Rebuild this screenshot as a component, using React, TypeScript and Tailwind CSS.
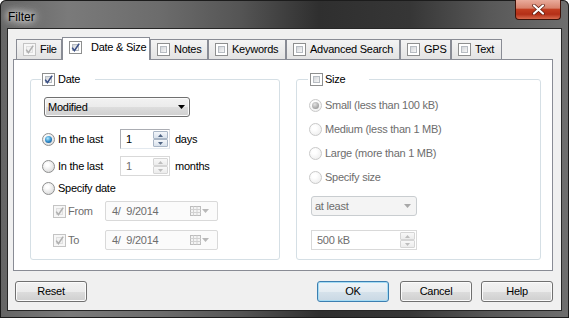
import React from "react";

function Check({ checked = false, disabled = false }: { checked?: boolean; disabled?: boolean }) {
  return (
    <span
      className={
        "relative block w-[13px] h-[13px] shrink-0 border " +
        (disabled ? "border-[#c4c4c4] bg-[#f7f7f7]" : "border-[#8e8f8f] bg-white")
      }
    >
      <span
        className={
          "absolute inset-[2px] border " +
          (disabled
            ? "border-[#e0e0e0] bg-[#f2f2f2]"
            : "border-[#b7bcc2] bg-[linear-gradient(135deg,#d3d6da,#f7f7f7)]")
        }
      />
      {checked && (
        <svg className="absolute left-0 top-0" width="11" height="11" viewBox="0 0 11 11">
          <path
            d="M2.2 5.6 L4.4 8.6 L9.2 1.6"
            fill="none"
            stroke={disabled ? "#b0b0b0" : "#3a4f86"}
            strokeWidth="1.6"
          />
        </svg>
      )}
    </span>
  );
}

function Radio({ checked = false, disabled = false }: { checked?: boolean; disabled?: boolean }) {
  return (
    <span
      className={
        "flex items-center justify-center w-[13px] h-[13px] shrink-0 rounded-full border " +
        (disabled
          ? "border-[#c9c9c9] bg-[radial-gradient(circle_at_40%_35%,#ffffff_20%,#ececec_90%)]"
          : "border-[#8e8f8f] bg-[radial-gradient(circle_at_40%_35%,#ffffff_15%,#d6d6d6_90%)]")
      }
    >
      {checked && (
        <span
          className={
            "w-[7px] h-[7px] rounded-full " +
            (disabled
              ? "bg-[radial-gradient(circle_at_40%_35%,#e2e2e2,#9c9c9c_75%)]"
              : "bg-[radial-gradient(circle_at_40%_35%,#b4ecff,#2a86c6_55%,#1a4f82_90%)]")
          }
        />
      )}
    </span>
  );
}

function Arrow({ up = false, color }: { up?: boolean; color: string }) {
  return (
    <svg width="5" height="3" viewBox="0 0 5 3">
      <path d={up ? "M0 3H5L2.5 0Z" : "M0 0H5L2.5 3Z"} fill={color} />
    </svg>
  );
}

function SpinBtn({ up = false, disabled = false }: { up?: boolean; disabled?: boolean }) {
  return (
    <div
      className={
        "flex-1 flex items-center justify-center border rounded-[1px] " +
        (disabled
          ? "border-[#d5d5d5] bg-[linear-gradient(180deg,#f8f8f8,#ececec)]"
          : "border-[#a9b6c6] bg-[linear-gradient(180deg,#f3f6fa,#d9e2ec)]")
      }
    >
      <Arrow up={up} color={disabled ? "#bdbdbd" : "#4f6584"} />
    </div>
  );
}

function Spin({ value, disabled = false, wide = false }: { value: string; disabled?: boolean; wide?: boolean }) {
  return (
    <div
      className={
        (wide ? "w-[106px] ml-[2px] " : "w-[50px] ") +
        "h-[20px] flex border bg-white " +
        (disabled
          ? "border-[#d9d9d9] text-[#6d6d6d]"
          : "border-[#abadb3] border-r-[#dbdfe6] border-b-[#e3e9ef] text-black")
      }
    >
      <div className="flex-1 flex items-center pl-[5px]">{value}</div>
      <div className="w-[16px] flex flex-col py-[1px] pr-[1px]">
        <SpinBtn up disabled={disabled} />
        <SpinBtn disabled={disabled} />
      </div>
    </div>
  );
}

function DatePick() {
  return (
    <div className="w-[113px] h-[20px] flex items-center border border-[#d9d9d9] rounded-[2px] bg-[#fbfbfb] pl-[6px] pr-[8px] text-[#6d6d6d]">
      <span className="whitespace-pre">4/  9/2014</span>
      <svg className="ml-auto" width="11" height="10" viewBox="0 0 11 10">
        <rect x="0.5" y="0.5" width="10" height="9" fill="#f4f4f4" stroke="#bdbdbd" />
        <path d="M0.5 3.5H10.5M0.5 6.5H10.5M3.5 0.5V9.5M7 0.5V9.5" stroke="#d2d2d2" />
      </svg>
      <svg className="ml-[1px]" width="7" height="4" viewBox="0 0 7 4">
        <path d="M0 0H7L3.5 4Z" fill="#b9b9b9" />
      </svg>
    </div>
  );
}

function Btn({ label, def = false, cls }: { label: string; def?: boolean; cls: string }) {
  return (
    <div
      className={
        cls +
        " w-[72px] h-[21px] flex items-center justify-center rounded-[3px] border " +
        (def
          ? "border-[#3c7fb1] shadow-[inset_0_0_0_1px_#a6dcf4] bg-[linear-gradient(180deg,#eef4f8_0%,#e4ecf2_50%,#d6e2eb_51%,#c9d8e4_100%)]"
          : "border-[#707070] shadow-[inset_0_0_0_1px_#fbfbfb] bg-[linear-gradient(180deg,#f2f2f2_0%,#ebebeb_50%,#dddddd_51%,#cfcfcf_100%)]")
      }
    >
      {label}
    </div>
  );
}

function Tab({ label, w, selected = false, checked = false, disabled = false }: { label: string; w: string; selected?: boolean; checked?: boolean; disabled?: boolean }) {
  if (selected) {
    return (
      <div className={w + " relative z-10 -mb-px h-[23px] flex items-center pl-[6px] pb-[3px] gap-[9px] whitespace-nowrap bg-white border border-b-0 border-[#898c95]"}>
        <Check checked={checked} />
        <span>{label}</span>
      </div>
    );
  }
  return (
    <div className={w + " h-[20px] flex items-center pl-[6px] gap-[4px] whitespace-nowrap border border-b-0 border-[#898c95] bg-[linear-gradient(180deg,#f4f4f4,#e3e3e3)]"}>
      <Check checked={checked} disabled={disabled} />
      <span>{label}</span>
    </div>
  );
}

export default function App() {
  return (
    <div className="w-[569px] h-[318px] flex flex-col rounded-t-[6px] overflow-hidden text-[11px] tracking-[-0.25px] text-black font-['Liberation_Sans',Arial,sans-serif] bg-[linear-gradient(90deg,#656565_0%,#7a7a7a_12%,#6c6c6c_28%,#555555_42%,#2f2f2f_56%,#363636_72%,#585858_86%,#6e6e6e_100%)] shadow-[inset_0_0_0_1px_#1c1c1c]">
      {/* title bar */}
      <div className="h-[29px] flex items-start pl-[8px] pr-[8px]">
        <span className="mt-[8px] text-[12px] tracking-normal text-black [text-shadow:0_0_6px_#ffffff,0_0_10px_#ffffff,0_0_14px_#ffffff]">Filter</span>
        <div className="ml-auto w-[46px] h-[20px] flex items-center justify-center rounded-b-[4px] border border-t-0 border-[#3d1209] bg-[linear-gradient(180deg,#e9ab9b_0%,#d8826c_42%,#c23d20_50%,#b42f17_75%,#d7694c_100%)]">
          <svg width="13" height="11" viewBox="0 0 13 11">
            <path d="M2 1.5 L11 9.5 M11 1.5 L2 9.5" stroke="#5a1a0e" strokeWidth="3.6" strokeLinecap="round" />
            <path d="M2 1.5 L11 9.5 M11 1.5 L2 9.5" stroke="#ffffff" strokeWidth="2.2" strokeLinecap="round" />
          </svg>
        </div>
      </div>

      {/* client */}
      <div className="mx-[8px] h-[281px] bg-[#f0f0f0] outline outline-1 outline-[#262626] flex flex-col">
        <div className="ml-[8px] mt-[8px] h-[22px] flex items-end">
          <Tab label="File" w="w-[46px]" checked disabled />
          <Tab label="Date & Size" w="w-[88px]" selected checked />
          <Tab label="Notes" w="w-[58px]" />
          <Tab label="Keywords" w="w-[78px]" />
          <Tab label="Advanced Search" w="w-[114px]" />
          <Tab label="GPS" w="w-[51px]" />
          <Tab label="Text" w="w-[51px]" />
        </div>

        <div className="ml-[5px] w-[540px] h-[212px] border border-[#898c95] bg-white flex pl-[16px] pt-[19px] gap-[16px]">
          {/* Date group */}
          <div className="relative w-[250px] h-[181px] border border-[#d5dfe5] rounded-[3px]">
            <div className="absolute left-[10px] top-[-7px] h-[13px] w-[54px] bg-white flex items-center gap-[3px] pl-[1px]">
              <Check checked />
              <span>Date</span>
            </div>
            <div className="flex flex-col pl-[11px] pt-[17px]">
              <div className="ml-[2px] w-[146px] h-[20px] flex items-center rounded-[3px] border border-[#707070] shadow-[inset_0_0_0_1px_#fbfbfb] bg-[linear-gradient(180deg,#f2f2f2_0%,#ebebeb_50%,#dddddd_51%,#cfcfcf_100%)] pl-[3px] pr-[4px]">
                <span>Modified</span>
                <svg className="ml-auto" width="7" height="4" viewBox="0 0 7 4">
                  <path d="M0 0H7L3.5 4Z" fill="#000" />
                </svg>
              </div>

              <div className="mt-[12px] h-[20px] flex items-center">
                <Radio checked />
                <span className="ml-[3px] w-[62px]">In the last</span>
                <Spin value="1" />
                <span className="ml-[5px]">days</span>
              </div>
              <div className="mt-[7px] h-[20px] flex items-center">
                <Radio />
                <span className="ml-[3px] w-[62px]">In the last</span>
                <Spin value="1" disabled />
                <span className="ml-[5px]">months</span>
              </div>
              <div className="mt-[2px] h-[20px] flex items-center">
                <Radio />
                <span className="ml-[3px]">Specify date</span>
              </div>
              <div className="mt-[3px] h-[20px] flex items-center ml-[11px]">
                <Check checked disabled />
                <span className="ml-[2px] w-[37px] text-[#6d6d6d]">From</span>
                <DatePick />
              </div>
              <div className="mt-[9px] h-[20px] flex items-center ml-[11px]">
                <Check checked disabled />
                <span className="ml-[2px] w-[37px] text-[#6d6d6d]">To</span>
                <DatePick />
              </div>
            </div>
          </div>

          {/* Size group */}
          <div className="relative w-[245px] h-[181px] border border-[#d5dfe5] rounded-[3px]">
            <div className="absolute left-[11px] top-[-7px] h-[13px] w-[61px] bg-white flex items-center gap-[2px] pl-[2px]">
              <Check />
              <span>Size</span>
            </div>
            <div className="flex flex-col pl-[12px] pt-[15px] text-[#6d6d6d]">
              <div className="h-[20px] flex items-center gap-[3px]">
                <Radio checked disabled />
                <span>Small (less than 100 kB)</span>
              </div>
              <div className="mt-[4px] h-[20px] flex items-center gap-[3px]">
                <Radio disabled />
                <span>Medium (less than 1 MB)</span>
              </div>
              <div className="mt-[4px] h-[20px] flex items-center gap-[3px]">
                <Radio disabled />
                <span>Large (more than 1 MB)</span>
              </div>
              <div className="mt-[4px] h-[20px] flex items-center gap-[3px]">
                <Radio disabled />
                <span>Specify size</span>
              </div>
              <div className="mt-[9px] ml-[2px] w-[106px] h-[20px] flex items-center rounded-[3px] border border-[#c9cdd0] bg-[#f4f4f4] pl-[3px] pr-[5px]">
                <span>at least</span>
                <svg className="ml-auto" width="7" height="4" viewBox="0 0 7 4">
                  <path d="M0 0H7L3.5 4Z" fill="#a8a8a8" />
                </svg>
              </div>
              <div className="mt-[14px]">
                <Spin value="500 kB" disabled wide />
              </div>
            </div>
          </div>
        </div>

        <div className="mt-[10px] h-[21px] flex">
          <Btn label="Reset" cls="ml-[7px]" />
          <Btn label="OK" def cls="ml-[230px]" />
          <Btn label="Cancel" cls="ml-[11px]" />
          <Btn label="Help" cls="ml-[9px]" />
        </div>
      </div>
    </div>
  );
}
